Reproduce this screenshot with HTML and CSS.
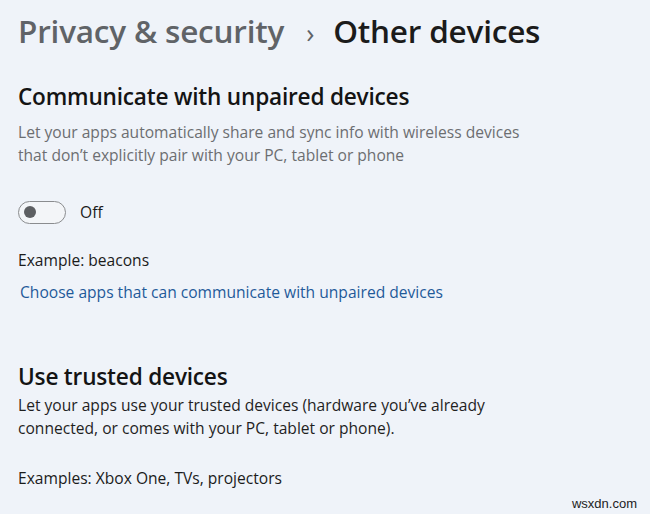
FILE: index.html
```html
<!DOCTYPE html>
<html lang="en">
<head>
<meta charset="utf-8">
<title>Other devices</title>
<link rel="stylesheet" href="styles.css">
</head>
<body>
<main class="page">
  <header class="breadcrumb">
    <span class="crumb-parent">Privacy &amp; security</span>
    <span class="crumb-sep">›</span>
    <span class="crumb-current">Other devices</span>
  </header>

  <section class="group group-unpaired">
    <h2 class="group-title">Communicate with unpaired devices</h2>
    <p class="group-desc muted">Let your apps automatically share and sync info with wireless devices<br>that don’t explicitly pair with your PC, tablet or phone</p>
    <div class="toggle-row">
      <span class="toggle" role="switch" aria-checked="false"><span class="toggle-knob"></span></span>
      <span class="toggle-label">Off</span>
    </div>
    <p class="example">Example: beacons</p>
    <a class="link" href="#">Choose apps that can communicate with unpaired devices</a>
  </section>

  <section class="group group-trusted">
    <h2 class="group-title">Use trusted devices</h2>
    <p class="group-desc">Let your apps use your trusted devices (hardware you’ve already<br>connected, or comes with your PC, tablet or phone).</p>
    <p class="example example-trusted">Examples: Xbox One, TVs, projectors</p>
  </section>

  <footer class="watermark">wsxdn.com</footer>
</main>
</body>
</html>
```

FILE: styles.css
```css
html, body {
  margin: 0;
  padding: 0;
}

body {
  background: #eff3f9;
  font-family: "Open Sans", "Noto Sans", sans-serif;
  color: #1b1b1b;
  width: 650px;
  height: 514px;
  overflow: hidden;
}

.page {
  position: relative;
  height: 514px;
  padding: 0 0 0 18px;
  box-sizing: border-box;
  display: flex;
  flex-direction: column;
}

.breadcrumb {
  display: flex;
  align-items: baseline;
  margin-top: 8px;
  height: 46px;
  font-size: 31.5px;
  font-weight: 600;
  line-height: 46px;
  letter-spacing: -0.2px;
  margin-bottom: 1px;
}

.crumb-parent {
  color: #606367;
}

.crumb-sep {
  color: #606367;
  font-size: 27px;
  font-weight: 400;
  margin: 0 19px 0 22px;
}

.crumb-current {
  color: #1b1b1b;
}

.group {
  display: flex;
  flex-direction: column;
  align-items: flex-start;
}

.group-title {
  margin: 0;
  font-size: 22.6px;
  font-weight: 600;
  line-height: 30px;
  letter-spacing: -0.2px;
  color: #141414;
}

.group-unpaired {
  margin-top: 27px;
}

.group-unpaired .group-desc {
  margin-top: 9px;
}

.group-desc {
  margin: 2px 0 0;
  font-size: 15.6px;
  line-height: 23px;
  color: #1f1f1f;
}

.group-desc.muted {
  color: #6c6e71;
}

.toggle-row {
  display: flex;
  align-items: center;
  margin-top: 33px;
  height: 24px;
}

.toggle {
  box-sizing: border-box;
  width: 48px;
  height: 23px;
  border: 1px solid #8a8c8f;
  border-radius: 12px;
  background: #f3f5f8;
  display: flex;
  align-items: center;
  padding-left: 5px;
}

.toggle-knob {
  width: 12px;
  height: 12px;
  border-radius: 50%;
  background: #5d5f62;
}

.toggle-label {
  margin-left: 14px;
  font-size: 15.6px;
  color: #1b1b1b;
}

.example {
  margin: 25px 0 0;
  font-size: 15.6px;
  line-height: 23px;
  color: #1b1b1b;
}

.link {
  margin-top: 9px;
  margin-left: 2px;
  font-size: 15.6px;
  line-height: 23px;
  color: #1f5a99;
  text-decoration: none;
}

.group-trusted {
  margin-top: 58px;
}

.example-trusted {
  margin-top: 27px;
}

.watermark {
  position: absolute;
  right: 13px;
  bottom: 3px;
  font-family: "Liberation Sans", Arial, sans-serif;
  font-size: 13px;
  color: #222;
}
```
